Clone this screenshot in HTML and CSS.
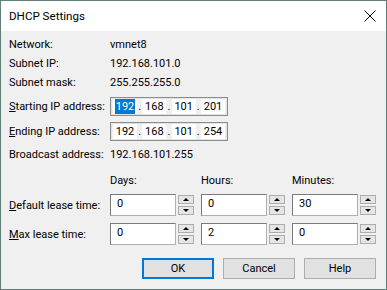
FILE: index.html
```html
<!DOCTYPE html>
<html>
<head>
<meta charset="utf-8">
<link rel="stylesheet" href="styles.css">
</head>
<body>
<div class="window">
  <div class="titlebar">
    <span class="title">DHCP Settings</span>
    <svg class="close" width="12" height="12" viewBox="0 0 12 12"><path d="M0.5 0.5 L11.5 11.5 M11.5 0.5 L0.5 11.5" stroke="#000" stroke-width="1"/></svg>
  </div>
  <div class="body">
    <div class="row info"><span class="label">Network:</span><span class="value">vmnet8</span></div>
    <div class="row info"><span class="label">Subnet IP:</span><span class="value ipval">192.168.101.0</span></div>
    <div class="row info"><span class="label">Subnet mask:</span><span class="value ipval">255.255.255.0</span></div>
    <div class="row iprow start"><span class="label"><u>S</u>tarting IP address:</span>
      <div class="ipbox">
        <span class="seg"><span class="sel">192</span></span><span class="dot">.</span><span class="seg">168</span><span class="dot">.</span><span class="seg">101</span><span class="dot">.</span><span class="seg">201</span>
      </div>
    </div>
    <div class="row iprow"><span class="label"><u>E</u>nding IP address:</span>
      <div class="ipbox">
        <span class="seg">192</span><span class="dot">.</span><span class="seg">168</span><span class="dot">.</span><span class="seg">101</span><span class="dot">.</span><span class="seg">254</span>
      </div>
    </div>
    <div class="row bcast"><span class="label">Broadcast address:</span><span class="value ipval">192.168.101.255</span></div>
    <div class="row heads"><span class="label"></span><span class="head">Days:</span><span class="head">Hours:</span><span class="head">Minutes:</span></div>
    <div class="row spinrow first"><span class="label"><u>D</u>efault lease time:</span>
      <div class="spin"><div class="field">0</div><div class="btns"><span class="up"></span><span class="down"></span></div></div>
      <div class="spin"><div class="field">0</div><div class="btns"><span class="up"></span><span class="down"></span></div></div>
      <div class="spin"><div class="field">30</div><div class="btns"><span class="up"></span><span class="down"></span></div></div>
    </div>
    <div class="row spinrow"><span class="label"><u>M</u>ax lease time:</span>
      <div class="spin"><div class="field">0</div><div class="btns"><span class="up"></span><span class="down"></span></div></div>
      <div class="spin"><div class="field">2</div><div class="btns"><span class="up"></span><span class="down"></span></div></div>
      <div class="spin"><div class="field">0</div><div class="btns"><span class="up"></span><span class="down"></span></div></div>
    </div>
    <div class="buttons">
      <button class="btn default">OK</button>
      <button class="btn">Cancel</button>
      <button class="btn">Help</button>
    </div>
  </div>
</div>
</body>
</html>
```
FILE: styles.css
```css
html, body {
  margin: 0;
  padding: 0;
}
body {
  width: 387px;
  height: 290px;
  overflow: hidden;
  font-family: Roboto, "Liberation Sans", Arial, sans-serif;
  font-size: 11px;
  color: #000;
}
.window {
  box-sizing: border-box;
  width: 387px;
  height: 290px;
  border: 1px solid #5f7f77;
  background: #f0f0f0;
  display: flex;
  flex-direction: column;
}
.titlebar {
  height: 30px;
  background: #fff;
  display: flex;
  align-items: center;
  justify-content: space-between;
  padding: 0 10px 0 8px;
  flex: none;
}
.title {
  font-size: 11.6px;
  margin-top: -1px;
}
.close {
  display: block;
  margin-top: -1px;
}
.body {
  padding: 4px 0 0 8px;
  flex: 1;
}
.row {
  display: flex;
  align-items: center;
}
.label {
  width: 101px;
  flex: none;
  white-space: nowrap;
}
.info {
  height: 19px;
}
.iprow {
  height: 25px;
}
.iprow.start {
  margin-top: 2px;
}
.ipbox {
  box-sizing: border-box;
  width: 118px;
  height: 19px;
  border: 1px solid #8c8c8c;
  background: #f0f0f0;
  display: flex;
  align-items: stretch;
  padding: 1px 2px;
  box-shadow: inset 0 0 0 1px #e3e3e3;
}
.seg {
  background: #fff;
  width: 24px;
  display: flex;
  align-items: center;
  justify-content: center;
}
.dot {
  flex: 1;
  display: flex;
  align-items: center;
  justify-content: center;
}
.sel {
  background: #0078d7;
  color: #fff;
  padding: 0 1px;
  line-height: 15px;
}
.bcast {
  height: 21px;
}
.heads {
  height: 22px;
  margin-top: 4px;
}
.head {
  width: 91px;
  flex: none;
}
.spinrow {
  height: 22px;
}
.spinrow.first {
  margin-top: 3px;
  margin-bottom: 7px;
}
.spin {
  width: 91px;
  flex: none;
  display: flex;
  align-items: stretch;
  height: 22px;
}
.field {
  box-sizing: border-box;
  width: 66px;
  height: 22px;
  border: 1px solid #7a7a7a;
  border-color: #7a7a7a #b0b0b0 #b0b0b0 #7a7a7a;
  background: #fff;
  padding-left: 6px;
  line-height: 18px;
}
.btns {
  margin-left: 2px;
  width: 16px;
  display: flex;
  flex-direction: column;
  justify-content: space-between;
  padding: 1px 0;
  box-sizing: border-box;
}
.up, .down {
  box-sizing: border-box;
  height: 9px;
  border: 1px solid #adadad;
  background: #e5e5e5;
  display: flex;
  align-items: center;
  justify-content: center;
}
.up::after, .down::after {
  content: "";
  width: 0;
  height: 0;
  border-left: 3px solid transparent;
  border-right: 3px solid transparent;
}
.up::after {
  border-bottom: 3px solid #000;
}
.down::after {
  border-top: 3px solid #000;
}
.buttons {
  display: flex;
  justify-content: flex-end;
  gap: 9px;
  margin-top: 13px;
  padding-right: 10px;
}
.btn {
  box-sizing: border-box;
  width: 72px;
  height: 21px;
  border: 1px solid #adadad;
  background: #e1e1e1;
  font-family: inherit;
  font-size: 11px;
  color: #000;
  padding: 0;
}
.btn.default {
  border: 2px solid #0078d7;
}
```
